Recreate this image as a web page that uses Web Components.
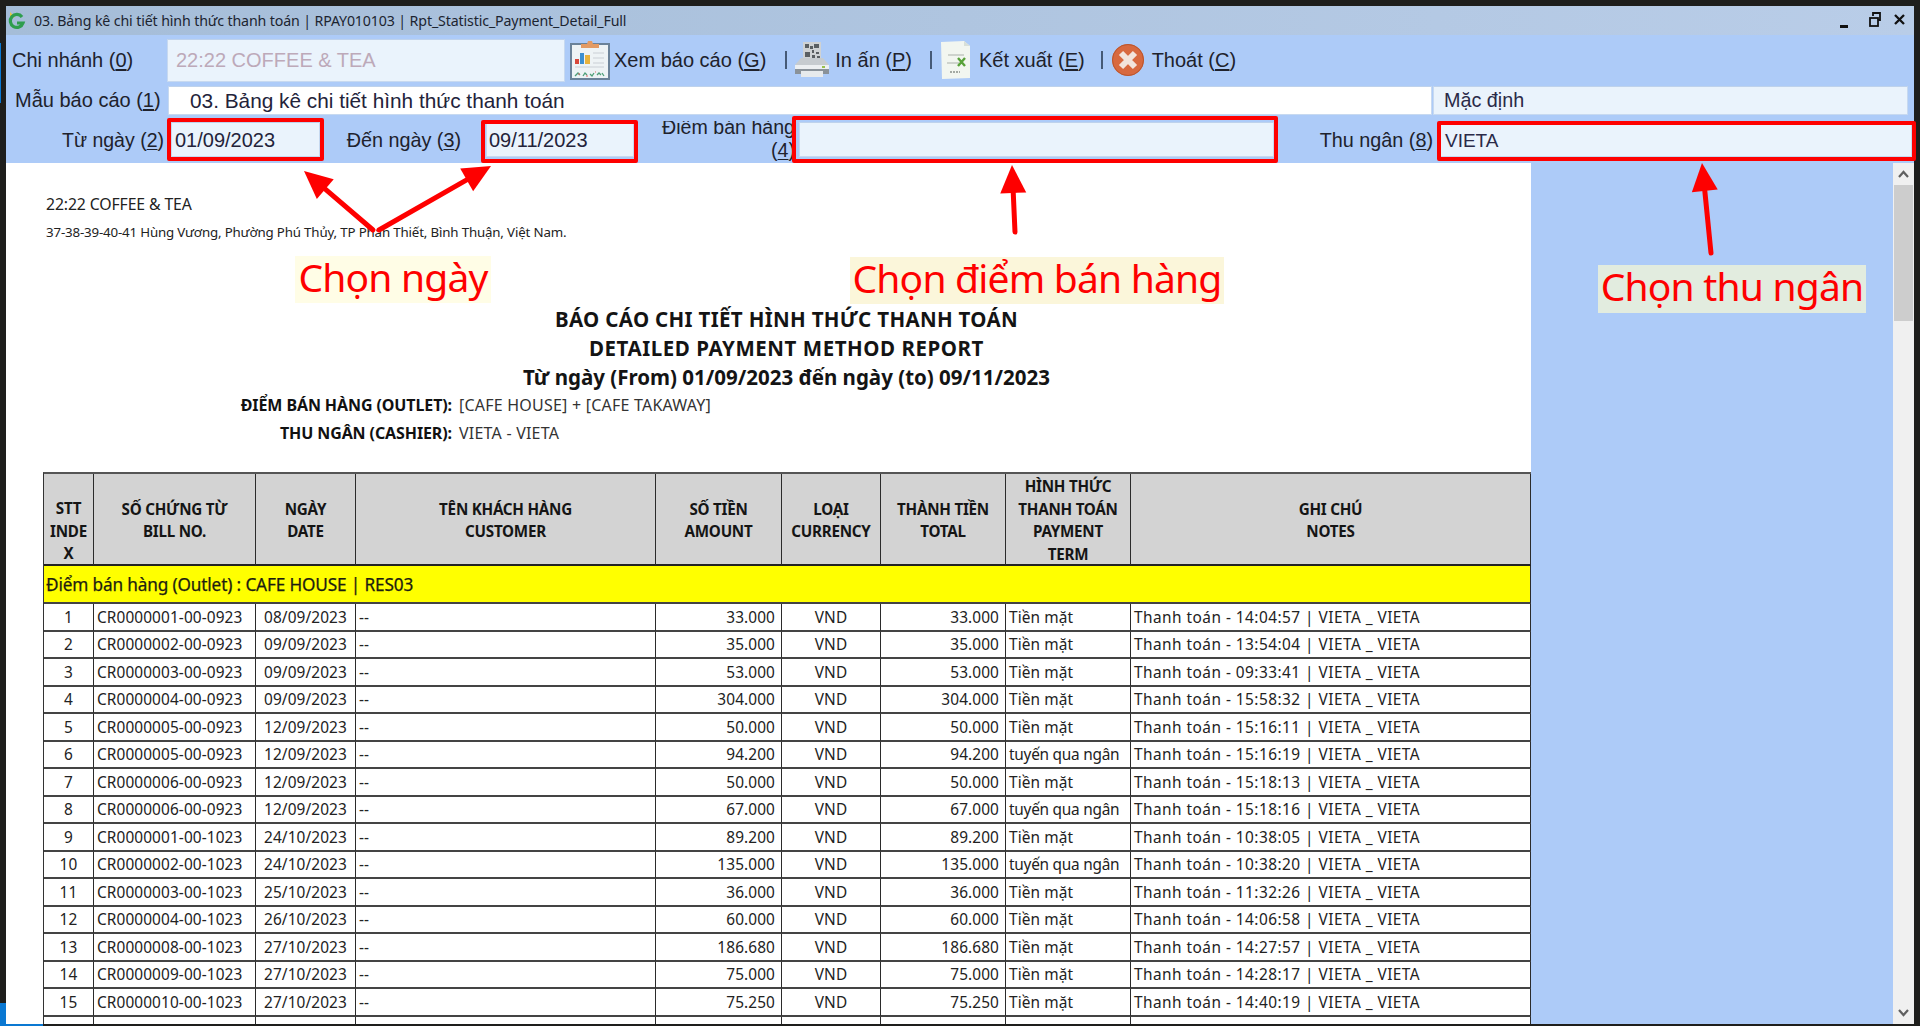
<!DOCTYPE html>
<html lang="vi"><head><meta charset="utf-8"><title>Rpt</title>
<style>
html,body{margin:0;padding:0;width:1920px;height:1026px;overflow:hidden;background:#1e1e1c}
body{font-family:"Liberation Sans",Arial,sans-serif;position:relative}
u{text-underline-offset:2px}
</style></head><body>
<desk-frame>
  <erp-window>
    <title-bar slot="title">03. Bảng kê chi tiết hình thức thanh toán | RPAY010103 | Rpt_Statistic_Payment_Detail_Full</title-bar>
    <tool-row slot="rows" style="--h:50px">
      <fld-label w="161" align="left" pad="6">Chi nhánh (<u>0</u>)</fld-label>
      <text-field w="398" h="43" color="#bda9b9" pad="8">22:22 COFFEE &amp; TEA</text-field>
      <tool-btn ml="5" gap="4" icon="report">Xem báo cáo (<u>G</u>)</tool-btn>
      <tool-sep ml="19"></tool-sep>
      <tool-btn ml="7" gap="5" icon="printer">In ấn (<u>P</u>)</tool-btn>
      <tool-sep ml="18"></tool-sep>
      <tool-btn ml="9" gap="9" icon="excel">Kết xuất (<u>E</u>)</tool-btn>
      <tool-sep ml="16"></tool-sep>
      <tool-btn ml="9" gap="8" icon="close">Thoát (<u>C</u>)</tool-btn>
    </tool-row>
    <tool-row slot="rows" style="--h:31px">
      <fld-label w="162" align="left" pad="9">Mẫu báo cáo (<u>1</u>)</fld-label>
      <text-field w="1264" h="29" bg="#ffffff" pad="21" size="20.8">03. Bảng kê chi tiết hình thức thanh toán</text-field>
      <text-field ml="1" w="475" h="29" pad="10" size="19.8" color="#2a2a48">Mặc định</text-field>
    </tool-row>
    <tool-row slot="rows" style="--h:47px">
      <fld-label w="158" align="right" size="19.5" top="2">Từ ngày (<u>2</u>)</fld-label>
      <text-field ml="7" w="149" h="35" pad="3" top="2">01/09/2023</text-field>
      <fld-label w="141" align="right" size="19.8" top="2">Đến ngày (<u>3</u>)</fld-label>
      <text-field ml="25" w="148" h="35" pad="2" top="2">09/11/2023</text-field>
      <fld-clip w="161">Điểm bán hàng (<u>4</u>)</fld-clip>
      <text-field ml="4" w="475" h="35"></text-field>
      <fld-label w="159" align="right" size="19.8" top="2">Thu ngân (<u>8</u>)</fld-label>
      <text-field ml="7" w="472" h="35" pad="4" size="19" color="#2a2a48" top="2">VIETA</text-field>
    </tool-row>
    <report-sheet slot="sheet"></report-sheet>
    <scroll-rail slot="rail"></scroll-rail>
  </erp-window>

  <red-box style="left:167px;top:118px;width:157px;height:43px"></red-box>
  <red-box style="left:481px;top:120px;width:157px;height:43px"></red-box>
  <red-box style="left:792px;top:116px;width:486px;height:47px"></red-box>
  <red-box style="left:1437px;top:121px;width:479px;height:40px"></red-box>

  <red-arrow x1="373" y1="230" x2="304" y2="171"></red-arrow>
  <red-arrow x1="379" y1="230" x2="491" y2="166"></red-arrow>
  <red-arrow x1="1015" y1="232" x2="1012" y2="165"></red-arrow>
  <red-arrow x1="1711" y1="253" x2="1702" y2="163"></red-arrow>

  <call-out style="left:295px;top:256px;width:196px;height:47px;background:#fffde6">Chọn ngày</call-out>
  <call-out style="left:850px;top:257px;width:374px;height:47px;background:#fbf6da">Chọn điểm bán hàng</call-out>
  <call-out style="left:1598px;top:265px;width:268px;height:48px;background:#e2ecdf">Chọn thu ngân</call-out>
</desk-frame>

<script>
const def=(n,html,extra={})=>{customElements.define(n,class extends HTMLElement{
  constructor(){super();this.attachShadow({mode:'open'}).innerHTML=html}
  connectedCallback(){extra.init&&extra.init.call(this)}
})};
const ICONS={
report:`<svg width="40" height="40" viewBox="0 0 40 40"><rect x="1" y="4" width="38" height="35" fill="#eef3f5" stroke="#6b8299" stroke-width="2"/><path d="M11 4 h6 l1-3 h4 l1 3 h6 v4 H11z" fill="#e39a63"/><rect x="5" y="19" width="4" height="5" fill="#d8473a"/><rect x="10" y="13" width="4" height="11" fill="#3d8fd0"/><rect x="15" y="15" width="5" height="9" fill="#e8b23c"/><path d="M23 13h11M23 18h11M23 23h11M5 27h29" stroke="#c9d0d6" stroke-width="1.2"/><path d="M5 36l3-3 2 2M13 36l2-3 2 2M20 34l2 2 2-3M27 35l2-2 2 2M32 33l2 3" stroke="#4d9e77" stroke-width="1.3" fill="none"/><path d="M8 34h2M16 36h2M25 32h1" stroke="#d66" stroke-width="1.2"/></svg>`,
printer:`<svg width="36" height="36" viewBox="0 0 36 36"><rect x="9" y="0" width="18" height="17" fill="#cfd2d4"/><path d="M11 2h4v4h-4zM20 2h5v4h-5zM11 10h5v5h-5zM18 8h2v3h-2zM22 10h3v2h-3zM18 13h3v3h-3zM23 14h3v2h-3zM16 4h3v3h-3z" fill="#5a5f63"/><path d="M7 16 h22 l6 7 v9 H1 v-9z" fill="#c6cbcf"/><path d="M1 23h34v4H1z" fill="#eceff1"/><path d="M1 27h34v5H1z" fill="#8a9299"/><rect x="7" y="29" width="22" height="6" fill="#e7eaec"/><rect x="28" y="24" width="3" height="2" fill="#9ac04a"/></svg>`,
excel:`<svg width="29" height="38" viewBox="0 0 29 38"><path d="M0 1 L23 0 L29 5 V37 L1 38z" fill="#f2f6f0"/><path d="M23 0v5h6z" fill="#d8dfd8"/><path d="M7 14h16M6 22h12" stroke="#aab0aa" stroke-width="1"/><path d="M17 17l7 8M24 17l-7 8" stroke="#58a23a" stroke-width="2.4"/><path d="M9 31h10" stroke="#a4aaa4" stroke-width="2" stroke-dasharray="2 1"/></svg>`,
close:`<svg width="32" height="34" viewBox="0 0 32 34"><circle cx="16" cy="17" r="16" fill="#d8693f"/><circle cx="16" cy="17" r="15.5" fill="none" stroke="#b9562f" stroke-width="1"/><path d="M9 10 L23 24 M23 10 L9 24" stroke="#f2e4dc" stroke-width="6"/></svg>`
};
def('desk-frame',`<style>:host{display:block;position:relative;width:1920px;height:1026px;overflow:hidden}
.a,.b,.c{position:absolute;background:#0a78d2}.a{left:0;top:43px;width:1px;height:60px}.b{left:0;top:1003px;width:6px;height:21px}.c{left:0;top:1024px;width:43px;height:2px}
.w{padding:6px 6px 2px 6px;height:1018px}</style><span class="a"></span><span class="b"></span><span class="c"></span><div class="w"><slot></slot></div>`);
def('erp-window',`<style>:host{display:flex;flex-direction:column;height:1018px;width:1908px;background:#adcbf8;overflow:hidden}
.body{flex:1;min-height:0;display:flex;overflow:hidden}
.gap{flex:1;background:#adcbf8}
</style><slot name="title"></slot><slot name="rows"></slot>
<div class="body"><slot name="sheet"></slot><div class="gap"></div><slot name="rail"></slot></div>`);
def('title-bar',`<style>:host{display:flex;align-items:center;height:29px;background:linear-gradient(90deg,#a5bdd8,#b9cde8);color:#1c2430;font:14.2px "Noto Sans",sans-serif;flex:none;position:relative}
svg.l{margin:0 8px 0 1px;flex:none}
.t{white-space:nowrap;letter-spacing:-.13px}
.c{margin-left:auto;display:flex;align-items:center;gap:0;padding-right:6px}
</style><svg class="l" width="19" height="20" viewBox="0 0 19 20"><path d="M3 1 L8 6 L3 8z" fill="#e6c94a"/><path d="M15 6 A6.5 6.5 0 1 0 16 12 H10" fill="none" stroke="#2e9e4e" stroke-width="3.2"/></svg><span class="t"><slot></slot></span>
<span class="c"><svg width="70" height="22" viewBox="0 0 70 22"><rect x="2" y="15" width="8" height="3" fill="#111"/><rect x="32" y="8" width="8" height="8" fill="none" stroke="#111" stroke-width="1.8"/><path d="M35 6 V3 H42 V10 H40" fill="none" stroke="#111" stroke-width="1.8"/><path d="M57 5 L66 14 M66 5 L57 14" stroke="#111" stroke-width="2.3"/></svg></span>`);
def('tool-row',`<style>:host{display:flex;align-items:center;height:var(--h);flex:none;font-size:20px;color:#20222c;white-space:nowrap}</style><slot></slot>`);
const apply=function(){const s=this.style,g=k=>this.getAttribute(k);
 if(g('w'))s.width=g('w')+'px'; if(g('h'))s.height=g('h')+'px'; if(g('ml'))s.marginLeft=g('ml')+'px';
 if(g('bg'))s.background=g('bg'); if(g('color'))s.color=g('color'); if(g('pad'))s.paddingLeft=g('pad')+'px';
 if(g('top'))s.paddingTop=g('top')+'px';
 if(g('size'))s.fontSize=g('size')+'px'; if(g('align'))s.justifyContent=g('align')=='right'?'flex-end':'flex-start';};
def('fld-label',`<style>:host{display:flex;align-items:center;flex:none;box-sizing:border-box;color:#20222c}</style><slot></slot>`,{init:apply});
def('fld-clip',`<style>:host{display:block;flex:none;height:40px;margin-top:5px;overflow:hidden;text-align:right;white-space:normal;line-height:23px;box-sizing:border-box;align-self:flex-start;color:#20222c;position:relative;font-size:19.6px}
.i{display:block;margin-left:auto;width:140px;margin-top:-5.5px}</style><span class="i"><slot></slot></span>`,{init:apply});
def('text-field',`<style>:host{display:flex;align-items:center;flex:none;box-sizing:border-box;background:#eaf3fc;border:1px solid #c7d9f0;border-top-color:#bed2ec;color:#23233a;font-size:20px;overflow:hidden}</style><slot></slot>`,{init:apply});
def('tool-btn',`<style>:host{display:flex;align-items:center;flex:none;color:#20222c}.i{display:flex;align-items:center}</style><span class="i" id="i"></span><span id="t"><slot></slot></span>`,{init(){
 this.shadowRoot.getElementById('i').innerHTML=ICONS[this.getAttribute('icon')];
 this.shadowRoot.getElementById('t').style.marginLeft=this.getAttribute('gap')+'px';apply.call(this)}});
def('tool-sep',`<style>:host{display:block;flex:none;width:2px;height:18px;background:#465a76}</style>`,{init:apply});
def('report-sheet',`<style>:host{display:block;flex:none;width:1525px;height:100%;background:#fff;overflow:hidden;color:#222;font:15.8px "Noto Sans",sans-serif}
.h{padding:31px 0 0 40px;line-height:20px;height:20px;letter-spacing:-.12px}
.addr{font-size:13.3px;padding:8px 0 0 40px;height:20px;line-height:20px;letter-spacing:-.16px}
.tt{font:bold 20.5px/29px "Noto Sans",sans-serif;text-align:center;box-sizing:border-box;width:1525px;padding-left:36px;color:#141414}
.t1{margin-top:63px;letter-spacing:.33px}
.t2{letter-spacing:.55px}
.k{display:grid;grid-template-columns:446px auto;column-gap:7px;line-height:28px;font-size:16px;margin-top:-1px}
.k b{text-align:right;color:#111;letter-spacing:-.1px}
.k span{letter-spacing:.22px;color:#333}
report-table{margin-top:25px;margin-left:37px}
</style>
<div class="h">22:22 COFFEE &amp; TEA</div>
<div class="addr">37-38-39-40-41 Hùng Vương, Phường Phú Thủy, TP Phan Thiết, Bình Thuận, Việt Nam.</div>
<div class="tt t1">BÁO CÁO CHI TIẾT HÌNH THỨC THANH TOÁN</div>
<div class="tt t2">DETAILED PAYMENT METHOD REPORT</div>
<div class="tt">Từ ngày (From) 01/09/2023 đến ngày (to) 09/11/2023</div>
<div class="k"><b>ĐIỂM BÁN HÀNG (OUTLET):</b><span>[CAFE HOUSE] + [CAFE TAKAWAY]</span><b>THU NGÂN (CASHIER):</b><span>VIETA - VIETA</span></div>
<report-table></report-table>`);
const T='Tiền mặt',Q='tuyến qua ngân';
const DATA=[
['CR0000001-00-0923','08/09/2023','33.000',T,'14:04:57'],['CR0000002-00-0923','09/09/2023','35.000',T,'13:54:04'],
['CR0000003-00-0923','09/09/2023','53.000',T,'09:33:41'],['CR0000004-00-0923','09/09/2023','304.000',T,'15:58:32'],
['CR0000005-00-0923','12/09/2023','50.000',T,'15:16:11'],['CR0000005-00-0923','12/09/2023','94.200',Q,'15:16:19'],
['CR0000006-00-0923','12/09/2023','50.000',T,'15:18:13'],['CR0000006-00-0923','12/09/2023','67.000',Q,'15:18:16'],
['CR0000001-00-1023','24/10/2023','89.200',T,'10:38:05'],['CR0000002-00-1023','24/10/2023','135.000',Q,'10:38:20'],
['CR0000003-00-1023','25/10/2023','36.000',T,'11:32:26'],['CR0000004-00-1023','26/10/2023','60.000',T,'14:06:58'],
['CR0000008-00-1023','27/10/2023','186.680',T,'14:27:57'],['CR0000009-00-1023','27/10/2023','75.000',T,'14:28:17'],
['CR0000010-00-1023','27/10/2023','75.250',T,'14:40:19']];
const hdr=[['STT<br>INDE<br>X','pt'],['SỐ CHỨNG TỪ<br>BILL NO.'],['NGÀY<br>DATE'],['TÊN KHÁCH HÀNG<br>CUSTOMER'],['SỐ TIỀN<br>AMOUNT'],['LOẠI<br>CURRENCY'],['THÀNH TIỀN<br>TOTAL'],['HÌNH THỨC<br>THANH TOÁN<br>PAYMENT<br>TERM'],['GHI CHÚ<br>NOTES']];
let rows=hdr.map(h=>`<div class="c th ${h[1]||''}"><span>${h[0]}</span></div>`).join('');
rows+=`<div class="c ye">Điểm bán hàng (Outlet) : CAFE HOUSE | RES03</div>`;
DATA.forEach((r,i)=>{rows+=`<div class="c m">${i+1}</div><div class="c l">${r[0]}</div><div class="c m">${r[1]}</div><div class="c l">--</div><div class="c r">${r[2]}</div><div class="c m">VND</div><div class="c r">${r[2]}</div><div class="c l ${r[3]===Q?'q':''}">${r[3]}</div><div class="c l n">Thanh toán - ${r[4]} | VIETA _ VIETA</div>`});
for(let i=0;i<9;i++)rows+=`<div class="c"></div>`;
def('report-table',`<style>:host{display:block;width:1488px}
.g{display:grid;grid-template-columns:50px 162px 100px 300px 126px 99px 125px 125px 400px;grid-template-rows:92px 38px repeat(16,27.5px);border-top:2px solid #555;border-left:1px solid #333;color:#222;font-size:15.4px;letter-spacing:.1px;line-height:1}
.c{box-sizing:border-box;border-right:1.5px solid #2b2b2b;border-bottom:2px solid #444;display:flex;align-items:center;padding:1px 3px 0;white-space:nowrap;overflow:hidden;min-width:0}
.th{background:#d3d3d3;justify-content:center;text-align:center;font-weight:700;font-size:15.2px;line-height:22.5px;border-bottom-color:#222;color:#151515;white-space:normal;letter-spacing:-.25px;padding:2px 0 0}
.pt{padding-top:24px}
.ye{grid-column:1/-1;background:#ffff00;font-size:17.2px;color:#1d1d10;padding-left:2px;letter-spacing:-.14px;-webkit-text-stroke:.25px #1d1d10}
.m{justify-content:center}.r{justify-content:flex-end;padding-right:6px}
.n{letter-spacing:.47px}
.q{letter-spacing:-.25px}
</style><div class="g">${rows}</div>`);
def('scroll-rail',`<style>:host{display:flex;flex-direction:column;align-items:center;flex:none;width:21px;height:100%;background:#f0f0f0;box-sizing:border-box;position:relative}
.t{width:19px;height:136px;background:#cdcdcd;margin-top:0}
svg{flex:none;display:block}.s{flex:1}</style>
<svg width="21" height="22" viewBox="0 0 21 22"><path d="M6 14 L10.5 9 L15 14" fill="none" stroke="#606060" stroke-width="2.2"/></svg>
<div class="t"></div><div class="s"></div>
<svg width="21" height="22" viewBox="0 0 21 22"><path d="M6 8 L10.5 13 L15 8" fill="none" stroke="#606060" stroke-width="2.2"/></svg>`);
def('red-box',`<style>:host{position:absolute;display:block;box-sizing:border-box;border:4px solid #fe0000;border-radius:2px}</style>`);
def('call-out',`<style>:host{position:absolute;display:flex;align-items:center;justify-content:center;box-sizing:border-box;padding-bottom:7px;color:#fe0000;font:39px "Noto Sans",sans-serif;white-space:nowrap;letter-spacing:-.8px}</style><slot></slot>`);
def('red-arrow',`<style>:host{position:absolute;left:0;top:0;display:block;width:1920px;height:1026px;pointer-events:none}svg{display:block}</style><svg width="1920" height="1026" viewBox="0 0 1920 1026"></svg>`,{init(){
 const n=k=>+this.getAttribute(k),x1=n('x1'),y1=n('y1'),x2=n('x2'),y2=n('y2');
 const d=Math.hypot(x2-x1,y2-y1),ux=(x2-x1)/d,uy=(y2-y1)/d,L=28,W=13;
 const bx=x2-ux*L,by=y2-uy*L;
 this.shadowRoot.querySelector('svg').innerHTML=`<line x1="${x1}" y1="${y1}" x2="${bx}" y2="${by}" stroke="#fe0000" stroke-width="5" stroke-linecap="round"/><polygon fill="#fe0000" points="${x2},${y2} ${bx-uy*W},${by+ux*W} ${bx+uy*W},${by-ux*W}"/>`;
}});
</script>
</body></html>
